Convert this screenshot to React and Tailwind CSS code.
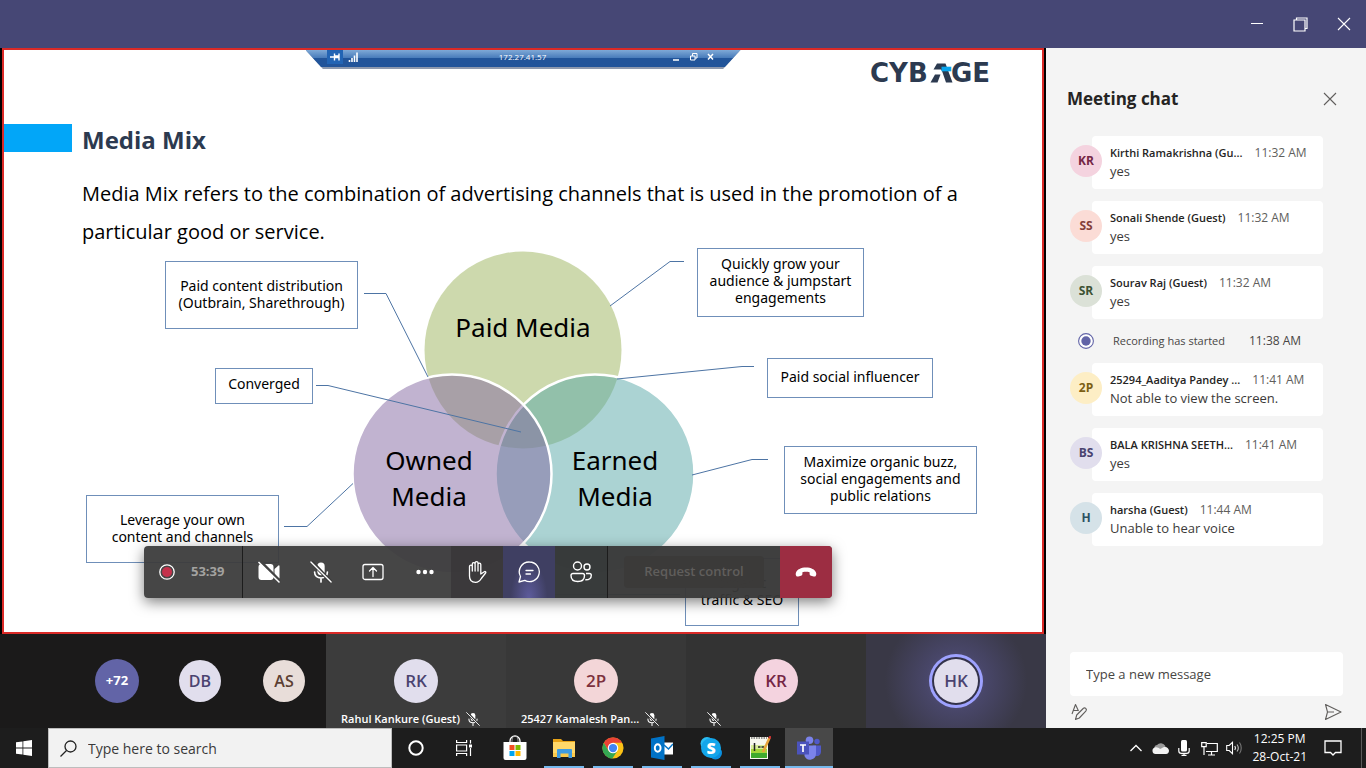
import React from "react";

const messages = [
  { initials: "KR", name: "Kirthi Ramakrishna (Gu...", time: "11:32 AM", text: "yes", tone: "bg-[#f4d3df] text-[#752645]" },
  { initials: "SS", name: "Sonali Shende (Guest)", time: "11:32 AM", text: "yes", tone: "bg-[#fbdcd6] text-[#84403a]" },
  { initials: "SR", name: "Sourav Raj (Guest)", time: "11:32 AM", text: "yes", tone: "bg-[#dbe1d7] text-[#3d5233]" },
  { recording: true, text: "Recording has started", time: "11:38 AM" },
  { initials: "2P", name: "25294_Aaditya Pandey ...", time: "11:41 AM", text: "Not able to view the screen.", tone: "bg-[#fdeec5] text-[#7c5f14]" },
  { initials: "BS", name: "BALA KRISHNA SEETH...", time: "11:41 AM", text: "yes", tone: "bg-[#e1deed] text-[#4a4370]" },
  { initials: "H", name: "harsha (Guest)", time: "11:44 AM", text: "Unable to hear voice", tone: "bg-[#d5e2e8] text-[#2b5161]" },
];

const boxes = [
  { place: "left-[161px] top-[15px] w-[193px] h-[68px] pt-[15px]", lines: ["Paid content distribution", "(Outbrain, Sharethrough)"] },
  { place: "left-[211px] top-[122px] w-[98px] h-[36px] pt-[6px]", lines: ["Converged"] },
  { place: "left-[82px] top-[249px] w-[193px] h-[68px] pt-[15px]", lines: ["Leverage your own", "content and channels"] },
  { place: "left-[693px] top-[2px] w-[167px] h-[69px] pt-[6px]", lines: ["Quickly grow your", "audience & jumpstart", "engagements"] },
  { place: "left-[763px] top-[112px] w-[166px] h-[40px] pt-[9px]", lines: ["Paid social influencer"] },
  { place: "left-[780px] top-[200px] w-[193px] h-[68px] pt-[6px]", lines: ["Maximize organic buzz,", "social engagements and", "public relations"] },
  { place: "left-[681px] top-[312px] w-[114px] h-[68px] pt-[15px]", lines: ["organic", "traffic & SEO"] },
];

function CybageLogo() {
  return (
    <svg width="126" height="40" viewBox="-1 -7 126 40" role="img" aria-label="Cybage">
      <text x="0" y="21" fontFamily="DejaVu Sans" fontWeight="700" fontSize="26" fill="#2c3a50">CYB</text>
      <path d="M67 2.500h8.500L82.500 21.500h-6.500L72 10l-1-1.500h-7.500zM60.500 21.500L65 13.500h5.500L67.500 21.500z" fill="#2c3a50" />
      <rect x="71.500" y="5.700" width="9.800" height="4.600" fill="#08a5ee" />
      <text x="81" y="21" fontFamily="DejaVu Sans" fontWeight="700" fontSize="26" fill="#2c3a50">GE</text>
    </svg>
  );
}

function ConnectionBar() {
  return (
    <div className="flex h-[19px] items-start bg-[#8d99ae] [clip-path:polygon(0_0,100%_0,96%_100%,4%_100%)]">
      <div className="flex h-[17px] flex-1 items-center bg-linear-to-b from-[#7fa9d6] from-0% via-[#4a7dbb] via-45% to-[#21549a] to-46% pb-[3px] pl-[21px] pr-[27px] text-white">
        <span className="flex h-[14px] w-4 items-center justify-center bg-[#2264b4]">
          <svg width="10" height="8" viewBox="0 0 10 8" stroke="#fff" strokeWidth="1.400" fill="none"><path d="M0 4h4M4.500 .5v7M9 .5v7M4.500 4.500H9M5 3h4" /></svg>
        </span>
        <svg className="ml-1" width="11" height="10" viewBox="0 0 11 10" stroke="#fff" strokeWidth="1.600"><path d="M2.500 10V8M5 10V6M7.500 10V3.500M10 10V.5" /></svg>
        <span className="flex-1 pl-4 text-center text-[8px] leading-[14px]">172.27.41.57</span>
        <svg width="42" height="10" viewBox="0 0 42 10" fill="none" stroke="#fff" strokeWidth="1.500">
          <path d="M1 8h6M36 2l5 5.500M41 2l-5 5.500" />
          <path strokeWidth="1" d="M18.500 4h4.500v4h-4.500zM20.500 4V1.500h4.500V6h-2" />
        </svg>
      </div>
    </div>
  );
}

function Diagram() {
  return (
    <figure className="relative -mt-[5px] h-[386px] font-['Noto_Sans',sans-serif] text-black">
      <svg className="absolute left-0 top-0" width="1038" height="386" viewBox="4 246 1038 386" fill="none">
        <circle cx="523" cy="350" r="98.500" fill="#9bb35b" fillOpacity="0.500" />
        <circle cx="595" cy="474" r="99.500" fill="#57a7a7" fillOpacity="0.500" stroke="#fff" strokeWidth="2.500" />
        <circle cx="452" cy="474" r="99.500" fill="#8367a1" fillOpacity="0.500" stroke="#fff" strokeWidth="2.500" />
        <path stroke="#4d74a4" d="M364 293.500h22L428 377M316 385.500h12L521 432M284 526.500h23l46-43M610 306l60-44.500h14M617 379l125-12.500h12M692 475l60-15.500h16M545 594.500h135" />
      </svg>
      {boxes.map((b) => (
        <div key={b.lines.join()} className={"absolute whitespace-nowrap border border-[#6f8fb9] text-center text-[14px] leading-[17px] " + b.place}>
          {b.lines.map((l) => <div key={l}>{l}</div>)}
        </div>
      ))}
      <div className="absolute left-[429px] top-[63px] w-[180px] text-center text-[26px] leading-9">Paid Media</div>
      <div className="absolute left-[365px] top-[196px] w-[120px] text-center text-[26px] leading-9">Owned<br />Media</div>
      <div className="absolute left-[551px] top-[196px] w-[120px] text-center text-[26px] leading-9">Earned<br />Media</div>
    </figure>
  );
}

function MicOff({ size }) {
  return (
    <svg width={size} height={size} viewBox="0 0 24 24" fill="none" stroke="#fff" strokeWidth="1.800" strokeLinecap="round">
      <rect x="8" y="1.500" width="8" height="14" rx="4" fill="#fff" stroke="none" />
      <path d="M5 12c0 4 3 6.500 7 6.500s7-2.500 7-6.500M12 18.500V23" />
      <path d="M2 1l21 22" stroke="#3b3b3b" strokeWidth="4" />
      <path d="M1 1l22 22" strokeWidth="1.500" />
    </svg>
  );
}

function CallButton({ label, className = "", children }) {
  return (
    <button type="button" aria-label={label} className={"flex w-[52px] items-center justify-center " + className}>
      {children}
    </button>
  );
}

function CallToolbar() {
  return (
    <div className="absolute bottom-[34px] left-[140px] flex h-[52px] overflow-hidden rounded bg-[#3c3c3c]/95 shadow-[0_4px_14px_rgba(0,0,0,0.5)]" role="toolbar">
      <div className="flex w-[99px] items-center border-r border-[#1c1c1c] pl-[15px]">
        <svg width="16" height="16" viewBox="0 0 16 16"><circle cx="8" cy="8" r="7.200" fill="none" stroke="#fff" strokeWidth="1.300" /><circle cx="8" cy="8" r="5" fill="#c4314b" /></svg>
        <span className="ml-4 text-[13px] font-bold text-[#a3a2a0]">53:39</span>
      </div>
      <CallButton label="Turn camera on">
        <svg width="24" height="24" viewBox="0 0 24 24">
          <path fill="#fff" d="M4.500 4h9A3 3 0 0116.500 7v10a3 3 0 01-3 3h-9a3 3 0 01-3-3V7a3 3 0 013-3zM17.500 9l4-3.500c.4-.3 1-.1 1 .5v12c0 .6-.6.800-1 .5l-4-3.500z" />
          <path d="M3 1l21 21" stroke="#444" strokeWidth="3" /><path d="M1.500 2L22.500 22.500" stroke="#fff" strokeWidth="1.500" />
        </svg>
      </CallButton>
      <CallButton label="Unmute"><MicOff size={22} /></CallButton>
      <CallButton label="Share">
        <svg width="22" height="22" viewBox="0 0 22 22" fill="none" stroke="#fff" strokeWidth="1.300" strokeLinecap="round" strokeLinejoin="round"><rect x="1" y="3.500" width="20" height="15" rx="2" /><path d="M11 15.500v-9M7.500 10L11 6.500l3.500 3.500" /></svg>
      </CallButton>
      <CallButton label="More actions">
        <svg width="18" height="6" viewBox="0 0 18 6" fill="#fff"><circle cx="2.500" cy="3" r="2.200" /><circle cx="9" cy="3" r="2.200" /><circle cx="15.500" cy="3" r="2.200" /></svg>
      </CallButton>
      <CallButton label="Raise hand" className="bg-[#383638]/80">
        <svg width="22" height="24" viewBox="0 0 22 24" fill="none" stroke="#fff" strokeWidth="1.300" strokeLinejoin="round" strokeLinecap="round">
          <path d="M3.500 12V6.500a1.400 1.400 0 012.800 0V11M6.300 10V4a1.400 1.400 0 012.800 0v7M9.100 10V3a1.400 1.400 0 012.900 0v8M12 10V4.500a1.400 1.400 0 012.800 0V14l3.500-2.300c1-.6 2 .4 1.300 1.300l-4.300 5.500c-1.600 3-3.300 3.800-5.800 3.800-3.800 0-6-2.600-6-6.300v-5" />
        </svg>
      </CallButton>
      <CallButton label="Hide conversation" className="bg-[radial-gradient(ellipse_at_bottom,#5d5b9c_0%,#3f3f62_50%)]">
        <svg width="24" height="24" viewBox="0 0 24 24" fill="none" stroke="#fff" strokeWidth="1.300" strokeLinecap="round" strokeLinejoin="round"><path d="M12.500 2a9.800 9.800 0 11-4.700 18.400L2 22l1.500-5.500A9.800 9.800 0 0112.500 2zM9 10.500h7M9 14h4.500" /></svg>
      </CallButton>
      <CallButton label="Show participants" className="bg-[#343838]/80">
        <svg width="24" height="24" viewBox="0 0 24 24" fill="none" stroke="#fff" strokeWidth="1.400"><circle cx="8.500" cy="6" r="4" /><circle cx="18" cy="7" r="3" /><path d="M4 13.500h9.500a2 2 0 012 2c0 3.700-2.500 6-6.700 6s-6.800-2.300-6.800-6a2 2 0 012-2zM17 13.500h3.500a1.800 1.800 0 011.800 1.800c0 3-2 4.700-6 4.500" /></svg>
      </CallButton>
      <div className="flex w-[173px] items-center justify-center border-l border-[#1c1c1c] bg-[#333]/30">
        <button type="button" disabled className="h-8 w-[140px] rounded bg-[#3b3a39]/95 text-[13px] font-semibold text-[#605e5c]">Request control</button>
      </div>
      <CallButton label="Leave" className="bg-[#9c2d42]">
        <svg width="22" height="10" viewBox="0 0 22 10" fill="#fff"><path d="M11 .5c5 0 9 2 10 5 .5 1.500.3 2.800-.3 3.500-.4.600-1.200.7-2 .5l-2.700-.7c-.9-.3-1.400-1-1.400-2V5.200C13.500 4.800 12 4.700 11 4.700s-2.500.1-3.600.5v1.600c0 1-.5 1.700-1.400 2l-2.700.7c-.8.200-1.600.1-2-.5C.7 8.300.5 7 1 5.500c1-3 5-5 10-5z" /></svg>
      </CallButton>
    </div>
  );
}

function Slide() {
  return (
    <section className="relative mx-[2px] border-2 border-[#da2a27] bg-white">
      <div className="grid grid-cols-[1fr_435px_1fr]">
        <div />
        <ConnectionBar />
        <div className="flex h-[74px] justify-end pr-[47px] pt-1"><CybageLogo /></div>
      </div>
      <div className="flex items-center gap-[10px]">
        <div className="h-7 w-[68px] bg-[#02a6f8]" />
        <h1 className="pt-1 text-[24px] font-bold leading-6 text-[#2c3a50]">Media Mix</h1>
      </div>
      <p className="mt-[23px] pl-[78px] pr-[70px] text-[20px] leading-[38px] text-black">
        Media Mix refers to the combination of advertising channels that is used in the promotion of a particular good or service.
      </p>
      <Diagram />
      <CallToolbar />
    </section>
  );
}

function Tile({ initials, name, muted, avatar, className }) {
  return (
    <div className={"relative flex flex-1 justify-center pt-[25px] " + className}>
      <span className={"flex size-11 items-center justify-center rounded-full text-[17px] font-semibold " + avatar}>{initials}</span>
      {muted && (
        <div className="absolute bottom-0 left-[15px] flex items-center gap-[6px] text-[11px] font-semibold leading-[18px] text-white">
          {name && <span>{name}</span>}
          <span className={"flex h-[18px] items-center " + (name ? "" : "ml-[6px]")}><MicOff size={14} /></span>
        </div>
      )}
    </div>
  );
}

function Participants() {
  return (
    <div className="flex h-[94px]">
      <div className="flex w-[326px] items-center justify-end gap-[42px] bg-[#1b1a1a] pr-[21px]">
        <span className="-mr-[2px] flex size-11 items-center justify-center rounded-full bg-[#6264a7] text-[13px] font-bold text-white">+72</span>
        <span className="flex size-[42px] items-center justify-center rounded-full bg-[#e1deed] text-[16px] font-semibold text-[#4a4370]">DB</span>
        <span className="flex size-[42px] items-center justify-center rounded-full bg-[#e8ddd9] text-[16px] font-semibold text-[#5c4033]">AS</span>
      </div>
      <Tile initials="RK" name="Rahul Kankure (Guest)" muted avatar="bg-[#e1deed] text-[#4a4370]" className="bg-[#3c3c3c]" />
      <Tile initials="2P" name="25427 Kamalesh Pan..." muted avatar="bg-[#f3d6d8] text-[#7d313d]" className="bg-[#383838]" />
      <Tile initials="KR" muted avatar="bg-[#f4d3df] text-[#752645]" className="bg-[#333333]" />
      <Tile initials="HK" avatar="bg-[#e1deed] text-[#4a4370] shadow-[0_0_0_2px_#33324a,0_0_0_5px_#9ea2ff]" className="bg-[radial-gradient(circle,#5d5a8e_0%,#484668_30%,#393846_70%)]" />
    </div>
  );
}

function Chat() {
  return (
    <aside className="flex w-80 flex-col bg-[#f4f4f4] pl-6 pr-[23px] text-[#252423]">
      <div className="-ml-[3px] flex items-center justify-between pr-[6px] pt-[39px]">
        <h2 className="text-[17px] font-bold leading-6">Meeting chat</h2>
        <button type="button" aria-label="Close chat">
          <svg width="14" height="14" viewBox="0 0 14 14" stroke="#605e5c" strokeWidth="1.100"><path d="M1 1l12 12M13 1L1 13" /></svg>
        </button>
      </div>
      <ol className="mt-[25px] flex flex-col gap-3 pr-5">
        {messages.map((m, i) =>
          m.recording ? (
            <li key={i} className="flex h-5 items-center pl-2 text-[11px] text-[#484644]">
              <svg width="16" height="16" viewBox="0 0 16 16"><circle cx="8" cy="8" r="7.400" fill="#fff" stroke="#6264a7" strokeWidth="1.100" /><circle cx="8" cy="8" r="4.700" fill="#6264a7" /></svg>
              <span className="ml-[19px]">{m.text}</span>
              <time className="ml-6 text-[12px]">{m.time}</time>
            </li>
          ) : (
            <li key={i} className="flex">
              <span className={"z-10 -mr-[10px] mt-[9px] flex size-8 shrink-0 items-center justify-center rounded-full text-[12px] font-bold " + m.tone}>{m.initials}</span>
              <div className="h-[53px] min-w-0 flex-1 rounded bg-white pl-[18px] pt-2 whitespace-nowrap">
                <div className="flex gap-3 text-[11px] leading-[18px]">
                  <span className="font-semibold">{m.name}</span>
                  <time className="text-[12px] text-[#605e5c]">{m.time}</time>
                </div>
                <p className="text-[13px] leading-[18px] text-[#3b3a39]">{m.text}</p>
              </div>
            </li>
          )
        )}
      </ol>
      <input aria-label="Type a new message" placeholder="Type a new message" className="mt-auto h-11 w-full rounded-sm bg-white px-4 text-[13px] outline-none placeholder:text-[#484644]" />
      <div className="flex h-8 items-center justify-between pr-[1px]">
        <button type="button" aria-label="Format">
          <svg width="18" height="18" viewBox="0 0 18 18" fill="none" stroke="#605e5c" strokeWidth="1.100" strokeLinejoin="round"><path d="M2 11L5.500 1.500 8.500 8M3.300 7.500h4.500M5.500 16.500l1.200-4.500 6.500-6.500a1.700 1.700 0 012.600 0c.8.800.8 1.800 0 2.600L9.300 15z" /></svg>
        </button>
        <button type="button" aria-label="Send">
          <svg width="18" height="18" viewBox="0 0 18 18" fill="none" stroke="#605e5c" strokeWidth="1.100" strokeLinejoin="round"><path d="M1.500 1.500L17 9 1.500 16.500 3.500 9zM3.500 9H10" /></svg>
        </button>
      </div>
    </aside>
  );
}

const icons = {
  Store: (
    <svg width="24" height="26" viewBox="0 0 24 26"><path d="M7 8V6a5 5 0 0110 0v2" fill="none" stroke="#fff" strokeWidth="1.300" /><path d="M9 8V5a3 4 0 016 0v3" fill="none" stroke="#aaa" strokeWidth=".8" /><path fill="#fff" d="M.5 7h23v16a2 2 0 01-2 2h-19a2 2 0 01-2-2z" /><path fill="#f25022" d="M6.500 10h5v5h-5z" /><path fill="#7fba00" d="M12.500 10h5v5h-5z" /><path fill="#00a4ef" d="M6.500 16h5v5h-5z" /><path fill="#ffb900" d="M12.500 16h5v5h-5z" /></svg>
  ),
  "File Explorer": (
    <svg width="22" height="22" viewBox="0 0 22 22"><path fill="#e8a317" d="M0 2h8l2 2h12v4H0z" /><path fill="#ffd869" d="M0 5h22v15H0z" /><path fill="#fbc94b" d="M0 16h22v4H0z" /><path fill="#3f9be0" d="M5 12h13a1 1 0 011 1v8h-3.500v-4.500h-8V21H4v-8a1 1 0 011-1z" /></svg>
  ),
  Chrome: (
    <svg width="22" height="22" viewBox="0 0 48 48"><circle cx="24" cy="24" r="23" fill="#fbc116" /><path fill="#ea4335" d="M4 12.500A23 23 0 0144 12.500H24L14 30z" /><path fill="#34a853" d="M4 12.500L14.100 29.800 24 35.500l8.500-3.500L22.500 47A23 23 0 014 12.500z" /><circle cx="24" cy="24" r="11.500" fill="#fff" /><circle cx="24" cy="24" r="9" fill="#4285f4" /></svg>
  ),
  Outlook: (
    <svg width="22" height="24" viewBox="0 0 22 24"><path fill="#fff" d="M12 6.500h10v12H12z" /><path fill="none" stroke="#0072c6" strokeWidth="1.500" d="M13 9l4.500 4L22 8" /><path fill="#0072c6" d="M0 2.500L13.500 0v24L0 21.500z" /><ellipse cx="6.700" cy="12" rx="2.900" ry="3.700" fill="none" stroke="#fff" strokeWidth="1.900" /></svg>
  ),
  Skype: (
    <svg width="22" height="24" viewBox="0 0 22 24"><circle cx="7" cy="7.500" r="6.500" fill="#2bbdf2" /><circle cx="15.500" cy="17" r="6.500" fill="#0a8ede" /><circle cx="11" cy="12" r="10" fill="#13a6ea" /><text x="11" y="17.500" textAnchor="middle" fontFamily="Open Sans" fontWeight="800" fontSize="16" fill="#fff">S</text></svg>
  ),
  "Notepad++": (
    <svg width="22" height="24" viewBox="0 0 22 24"><path fill="#f7f7ee" d="M1 1h18v22H1z" /><path fill="#d9ee9a" d="M2 9h16v4H2z" /><path fill="#a5d63a" d="M2 13h16v4H2z" /><path fill="#3faa2d" d="M2 17h16v5H2z" /><path d="M2 2h16" stroke="#777" strokeWidth="1.500" strokeDasharray="1.500 1" /><path d="M5.500 7v8M9 11h2.500M12.500 11h2.500" stroke="#222" strokeWidth="1.500" /><path d="M20.500 2L14 16" stroke="#e8a33a" strokeWidth="2.500" /><path d="M21.500 0l-1 2.500" stroke="#c33" strokeWidth="2.500" /></svg>
  ),
  Teams: (
    <svg width="24" height="24" viewBox="0 0 24 24"><circle cx="20" cy="5.500" r="2.700" fill="#5059c9" /><path fill="#5059c9" d="M16 9.500h8v6.500a4 4 0 01-6 3.500z" /><circle cx="12.500" cy="4.300" r="3.800" fill="#7b83eb" /><path fill="#7b83eb" d="M7.500 9.500H19v8a6 6 0 01-11.500 2.500z" /><path fill="#4b53bc" d="M0 5.500h12v13H0z" /><path d="M3 9h6M6 9v7" stroke="#fff" strokeWidth="1.700" /></svg>
  ),
};

function Taskbar() {
  return (
    <footer className="flex h-10 items-stretch bg-[#1d1d1d] text-white">
      <button type="button" aria-label="Start" className="flex w-12 items-center justify-center">
        <svg width="16" height="16" viewBox="0 0 16 16" fill="#fff"><path d="M0 2.300L6.500 1.400v6.200H0zM7.300 1.300L16 0v7.600H7.300zM0 8.400h6.500v6.200L0 13.700zM7.300 8.400H16V16l-8.700-1.300z" /></svg>
      </button>
      <label className="flex w-[344px] items-center gap-[11px] border border-[#bdbdbd] bg-[#f2f2f2] pl-[11px]">
        <svg width="17" height="17" viewBox="0 0 17 17" fill="none" stroke="#222" strokeWidth="1.300"><circle cx="10.500" cy="6.500" r="5.500" /><path d="M6.500 10.500L.5 16.500" /></svg>
        <input aria-label="Type here to search" placeholder="Type here to search" className="min-w-0 flex-1 bg-transparent text-[14px] outline-none placeholder:text-[#3a3a3a]" />
      </label>
      <button type="button" aria-label="Cortana" className="flex w-12 items-center justify-center">
        <svg width="16" height="16" viewBox="0 0 16 16"><circle cx="8" cy="8" r="6.700" fill="none" stroke="#fff" strokeWidth="2" /></svg>
      </button>
      <button type="button" aria-label="Task View" className="flex w-12 items-center justify-center">
        <svg width="16" height="16" viewBox="0 0 16 16" fill="none" stroke="#fff" strokeWidth="1.200"><path d="M.6 0v2.500h10V0M.6 16v-2.500h10V16M.6 5h10v6H.6zM14.500 0v3.500M14.500 8v8" /><path d="M13 4.500h3v3h-3z" fill="#fff" stroke="none" /></svg>
      </button>
      <nav className="ml-[3px] flex gap-[1px]">
        {Object.keys(icons).map((n) => (
          <button key={n} type="button" aria-label={n} className={"flex w-12 flex-col items-center justify-end " + (n === "Teams" ? "bg-[#484848]" : "")}>
            <span className="flex flex-1 items-center pt-[2px]">{icons[n]}</span>
            <span className={"h-[2px] " + (n === "Store" ? "" : n === "Teams" ? "w-full bg-[#76b9ed]" : "w-10 bg-[#76b9ed]")} />
          </button>
        ))}
      </nav>
      <div className="ml-auto flex items-center pr-1">
        <button type="button" aria-label="Show hidden icons" className="mr-[9px]"><svg width="14" height="8" viewBox="0 0 14 8" fill="none" stroke="#fff" strokeWidth="1.300"><path d="M1.500 7L7 1.500 12.500 7" /></svg></button>
        <svg width="17" height="12" viewBox="0 0 17 12"><path fill="#9b9b9b" d="M3 8a3 3 0 012-5A5 5 0 0113 3.500L14 6z" /><path fill="#f2f2f2" d="M3.500 12A3.300 3.300 0 013 5.500c2-.5 4 .5 5 1.500l4-2c3-.5 5 1.500 5 3.800A3.300 3.300 0 0114 12z" /></svg>
        <svg className="ml-[9px]" width="12" height="16" viewBox="0 0 12 16" fill="none" stroke="#fff" strokeWidth="1.200"><rect x="3" y="0" width="6" height="11.500" rx="1.500" fill="#fff" stroke="none" /><path d="M.8 8v3c0 1.500 1 2.300 2.500 2.300h5.400c1.500 0 2.500-.8 2.500-2.300V8M6 13.300V16M3.500 15.400h5" /></svg>
        <svg className="ml-[11px]" width="17" height="15" viewBox="0 0 17 15" fill="none" stroke="#fff" strokeWidth="1.200"><path d="M6 2.500h10.300v8H5M10.500 10.500v3M7 14h7M.7 1.700h4.500v4H.7zM3 5.500V14" /></svg>
        <svg className="ml-2" width="17" height="14" viewBox="0 0 17 14" fill="none" stroke="#fff" strokeWidth="1.100"><path d="M.7 4.500h2.500L6.500 1.300v11.400L3.200 9.500H.7z" /><path d="M8.800 5c.8 1.200.8 2.800 0 4" /><path stroke="#bbb" d="M11 3.500c1.500 2 1.500 5 0 7" /><path stroke="#777" d="M13.500 1.500c2.300 3 2.300 8 0 11" /></svg>
        <div className="ml-[9px] text-center text-[12px] leading-[18px]">
          <div>12:25 PM</div>
          <div>28-Oct-21</div>
        </div>
        <button type="button" aria-label="Notifications" className="ml-[17px]"><svg width="18" height="16" viewBox="0 0 18 16" fill="none" stroke="#fff" strokeWidth="1.300"><path d="M1 1h16v11.500h-5.500L9 15l-2.500-2.500H1z" /></svg></button>
        <div className="ml-[19px] h-10 w-px bg-[#5a5a5a]" />
      </div>
    </footer>
  );
}

export default function App() {
  return (
    <div className="flex min-h-screen flex-col bg-black font-['Open_Sans','Noto_Sans',sans-serif]">
      <header className="flex h-12 items-center justify-end gap-[29px] bg-[#464775] pr-[15px]">
        <button type="button" aria-label="Minimize"><svg width="14" height="14" viewBox="0 0 14 14" stroke="#fff"><path d="M1 6.500h12" /></svg></button>
        <button type="button" aria-label="Restore"><svg width="15" height="15" viewBox="0 0 15 15" fill="none" stroke="#fff" strokeWidth="1.200"><path d="M1 3h11v11H1zM3.500 3V1H14v10.500h-2" /></svg></button>
        <button type="button" aria-label="Close"><svg width="14" height="14" viewBox="0 0 14 14" stroke="#fff" strokeWidth="1.100"><path d="M1 1l12 12M13 1L1 13" /></svg></button>
      </header>
      <main className="flex flex-1">
        <div className="min-w-0 flex-1">
          <Slide />
          <Participants />
        </div>
        <Chat />
      </main>
      <Taskbar />
    </div>
  );
}
